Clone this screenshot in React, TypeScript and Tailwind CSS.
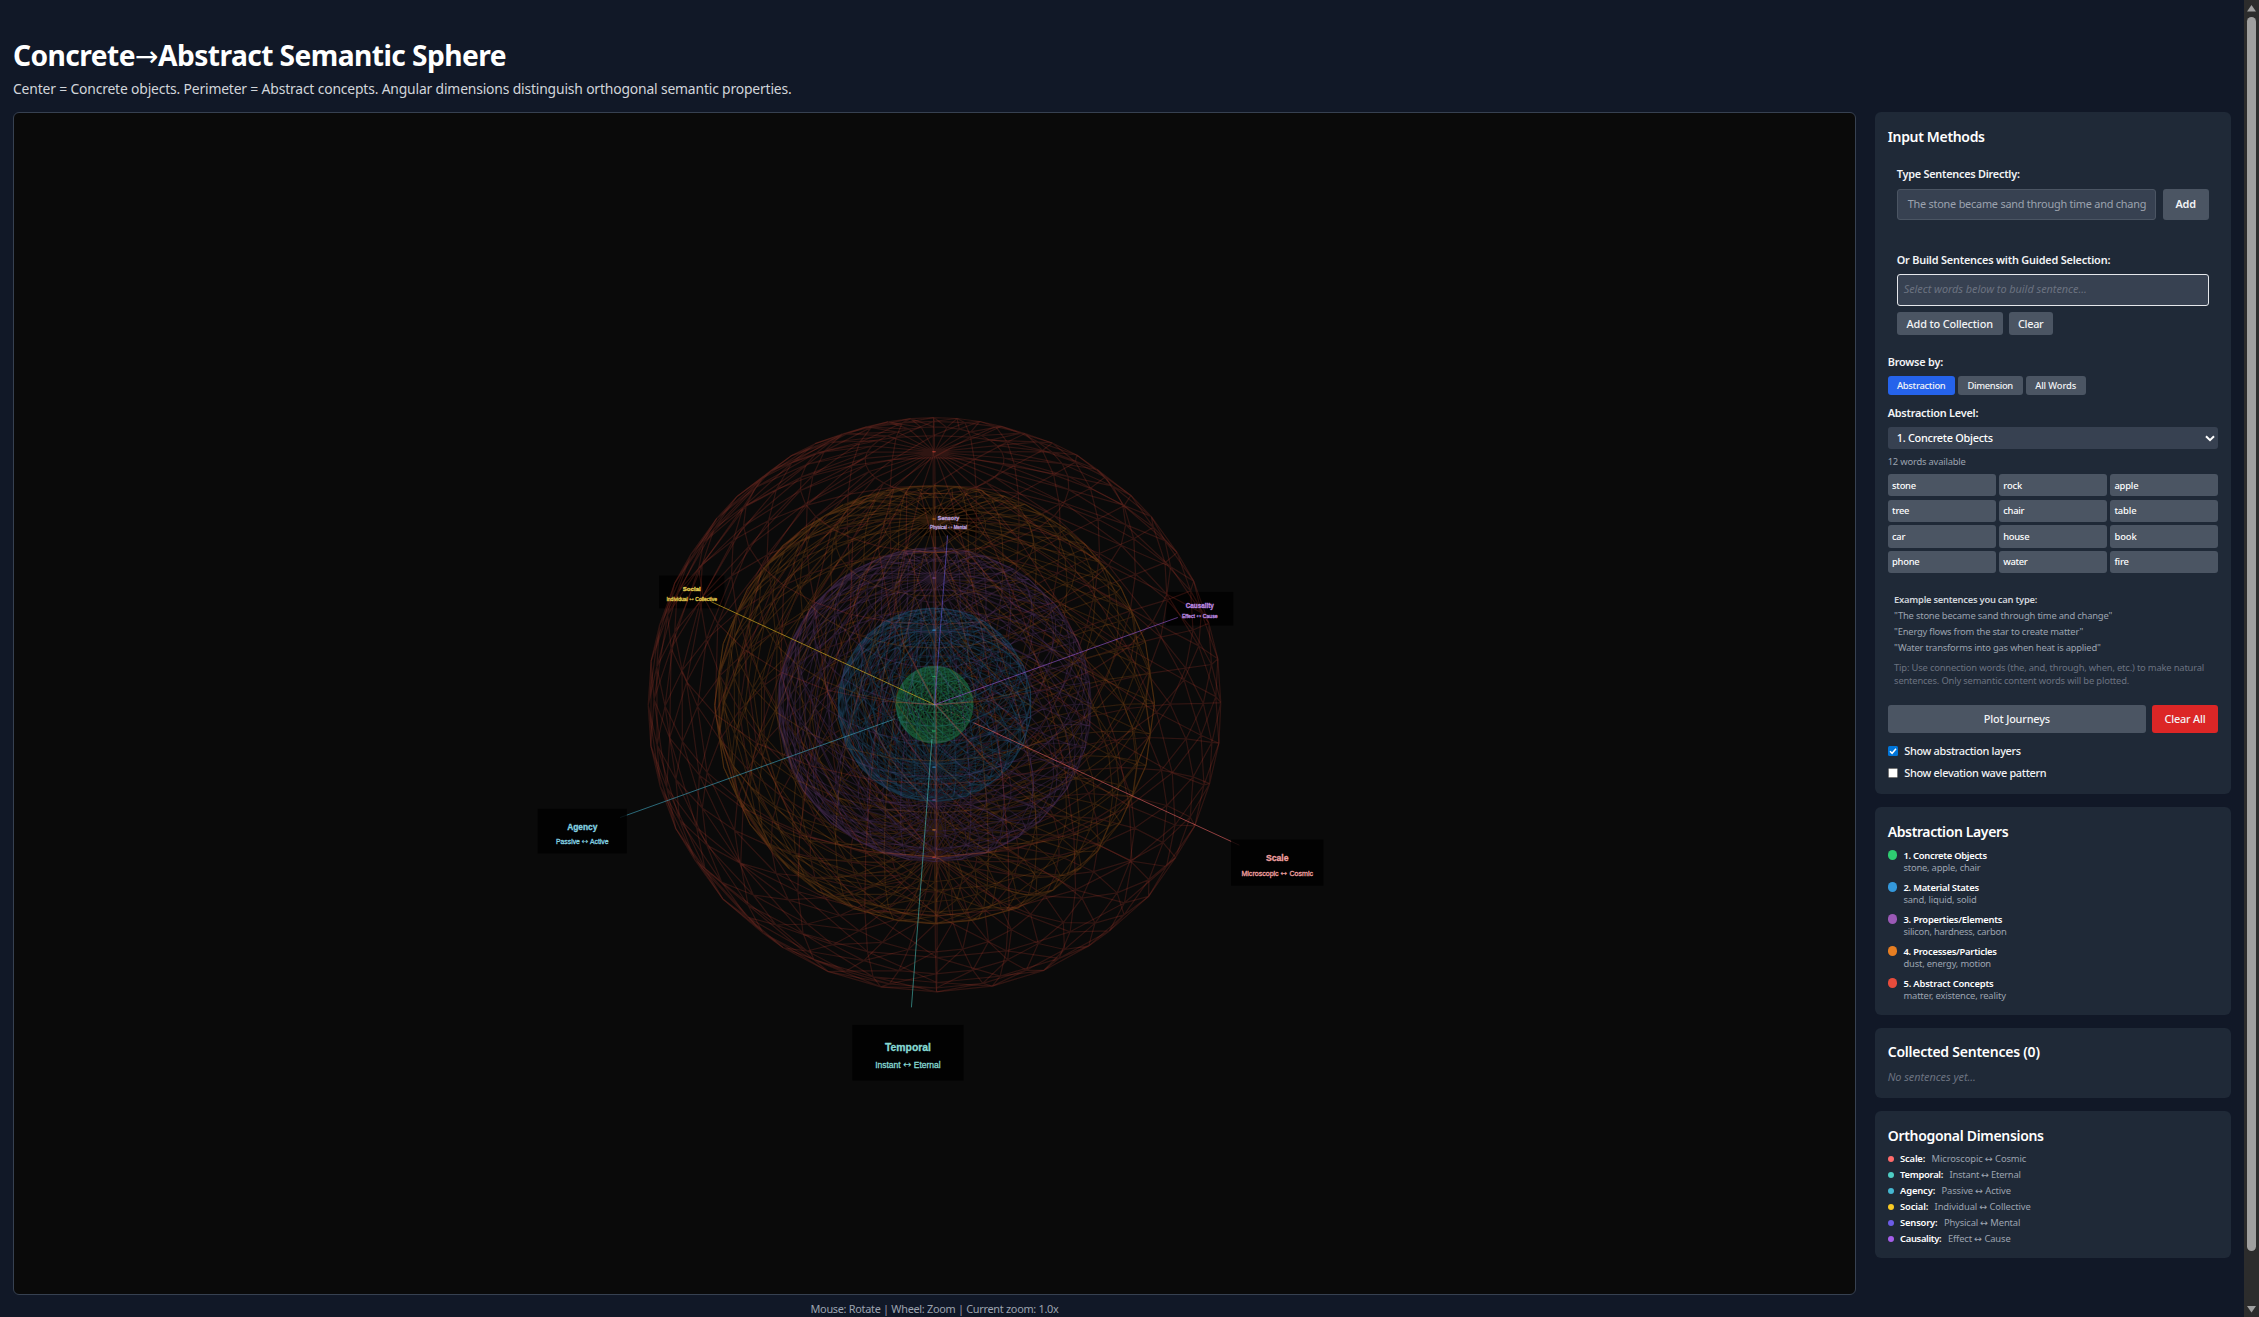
import React, { useLayoutEffect, useRef } from "react";

/* Single line of text whose tracking is adjusted to fill a given width. */
function T({ w, children, className = "" }: { w: number; children: string; className?: string }) {
  const ref = useRef<HTMLSpanElement>(null);
  useLayoutEffect(() => {
    const el = ref.current;
    if (!el) return;
    el.style.letterSpacing = "0px";
    const natural = el.getBoundingClientRect().width;
    el.style.letterSpacing = `${(w - natural) / children.length}px`;
  }, [w, children]);
  return (
    <span ref={ref} className={`inline-block whitespace-pre ${className}`}>
      {children.split(/([→↔])/).map((part, i) =>
        part === "→" || part === "↔" ? (
          <span key={i} className="font-['DejaVu_Sans',sans-serif] leading-none font-normal">
            {part}
          </span>
        ) : (
          part
        )
      )}
    </span>
  );
}

/* ---------- 3D scene ---------- */

const CX = 920.6;
const CY = 591.7;
const FOCAL = 769;
const DIST = 40;
const TILT = Math.PI / 4;

type P = [number, number];
type V = [number, number, number];

function project(x: number, y: number, z: number): P {
  const up = y * Math.cos(TILT) - z * Math.sin(TILT);
  const near = y * Math.sin(TILT) + z * Math.cos(TILT);
  const k = FOCAL / (DIST - near);
  return [CX + x * k, CY - up * k];
}

/* Wireframe edges of a sphere, split into the halves facing to and away from the camera. */
function spherePaths(r: number) {
  const W = 32;
  const H = 16;
  const spin = 0.0066;
  const vertex = (iy: number, ix: number): V => {
    const u = (ix / W) * Math.PI * 2 + spin;
    const v = (iy / H) * Math.PI;
    return [-r * Math.cos(u) * Math.sin(v), r * Math.cos(v), r * Math.sin(u) * Math.sin(v)];
  };
  let front = "";
  let back = "";
  const edge = (a: V, b: V) => {
    const my = (a[1] + b[1]) / 2;
    const mz = (a[2] + b[2]) / 2;
    const facing = (my * Math.sin(TILT) + mz * Math.cos(TILT)) * DIST > r * r;
    const p = project(...a);
    const q = project(...b);
    const d = `M${p[0].toFixed(1)} ${p[1].toFixed(1)}L${q[0].toFixed(1)} ${q[1].toFixed(1)}`;
    if (facing) front += d;
    else back += d;
  };
  for (let iy = 0; iy < H; iy++) {
    for (let ix = 0; ix < W; ix++) {
      const a = vertex(iy, ix);
      edge(a, vertex(iy + 1, ix));
      if (iy > 0) edge(a, vertex(iy, ix + 1));
      if (iy > 0 && iy < H - 1) edge(a, vertex(iy + 1, ix + 1));
    }
  }
  return { front, back };
}

const layers = [
  { r: 2, color: "#2ecc71", o: 0.2 },
  { r: 5, color: "#3498db", o: 0.16 },
  { r: 8, color: "#9b59b6", o: 0.17 },
  { r: 11, color: "#e67e22", o: 0.16 },
  { r: 14, color: "#e74c3c", o: 0.17 },
].map((l) => ({ ...l, ...spherePaths(l.r) }));

const axes = [
  { name: "Scale", range: ["Microscopic ", " Cosmic"], color: "#ff6b6b", text: "#f0a0a0", deg: 56.9, far: false },
  { name: "Temporal", range: ["Instant ", " Eternal"], color: "#4ecdc4", text: "#86d9d3", deg: -3.1, far: false },
  { name: "Agency", range: ["Passive ", " Active"], color: "#45b7d1", text: "#84d2e2", deg: -63.1, far: false },
  { name: "Social", range: ["Individual ", " Collective"], color: "#f9ca24", text: "#e6cf50", deg: -123.1, far: true },
  { name: "Sensory", range: ["Physical ", " Mental"], color: "#6c5ce7", text: "#b79fd6", deg: 176.9, far: true },
  { name: "Causality", range: ["Effect ", " Cause"], color: "#a55eea", text: "#bd8ae2", deg: 116.9, far: true },
];

type Axis = (typeof axes)[number];

function at(deg: number, len: number): P {
  const a = (deg * Math.PI) / 180;
  return project(Math.sin(a) * len, 0, Math.cos(a) * len);
}

function labelFrame(a: Axis) {
  const len = 17.65;
  const [x, y] = at(a.deg, len);
  const depth = 1 - (len / DIST) * Math.cos(TILT) * Math.cos((a.deg * Math.PI) / 180);
  return { x, y: a.far ? y - 0.8 : y, s: 76.6 / depth / 256 };
}

function LabelBox({ a }: { a: Axis }) {
  const { x, y, s } = labelFrame(a);
  return <rect x={x - 128 * s} y={y - 64 * s} width={256 * s} height={128 * s} fill="#000" fillOpacity={0.8} />;
}

function LabelText({ a }: { a: Axis }) {
  const { x, y, s } = labelFrame(a);
  return (
    <g fill={a.text} textAnchor="middle" fontFamily='"Liberation Sans", Arial, sans-serif'>
      <text x={x} y={y - 4 * s} fontSize={24 * s} fontWeight={700} stroke={a.text} strokeWidth={0.3}>
        {a.name}
      </text>
      <text x={x} y={y + 36 * s} fontSize={19.6 * s} stroke={a.text} strokeWidth={0.3}>
        {a.range[0]}
        <tspan fontFamily='"DejaVu Sans", sans-serif' fontSize={23 * s} strokeWidth={0}>↔</tspan>
        {a.range[1]}
      </text>
    </g>
  );
}

function AxisLine({ a }: { a: Axis }) {
  const [ox, oy] = at(0, 0);
  const [mx, my] = at(a.deg, a.far ? 0 : 2.4);
  const [ex, ey] = at(a.deg, 16);
  return (
    <g stroke={a.color} strokeWidth={1}>
      {!a.far && <line x1={ox} y1={oy} x2={mx} y2={my} strokeOpacity={0.25} strokeDasharray="3 3" />}
      <line x1={mx} y1={my} x2={ex} y2={ey} strokeOpacity={0.55} />
    </g>
  );
}

function Scene() {
  return (
    <svg className="block h-full w-full" viewBox="0 0 1841 1181" fill="none">
      {axes.filter((a) => a.far).map((a) => <LabelBox key={a.name} a={a} />)}
      {[...layers].reverse().map((l) => (
        <g key={l.r} strokeWidth={1.25}>
          {l.r < 14 && <path d={l.front + l.back} stroke="#0a0a0a" strokeOpacity={0.8} />}
          <path d={l.back} stroke={l.color} strokeOpacity={l.o} />
        </g>
      ))}
      {layers.map((l) => (
        <path key={l.r} d={l.front} stroke={l.color} strokeOpacity={l.o} strokeWidth={1.25} />
      ))}
      {layers.map((l) =>
        [1, -1].map((sgn) => {
          const [x, y] = project(0, l.r * sgn, 0);
          return <ellipse key={`${l.r}${sgn}`} cx={x - 0.6} cy={y} rx={2} ry={0.8} fill={l.color} fillOpacity={0.6} />;
        })
      )}
      {axes.map((a) => <AxisLine key={a.name} a={a} />)}
      {axes.filter((a) => !a.far).map((a) => <LabelBox key={a.name} a={a} />)}
      {axes.map((a) => <LabelText key={a.name} a={a} />)}
    </svg>
  );
}

/* ---------- side panel ---------- */

const words: [string, number][] = [
  ["stone", 23.7], ["rock", 19], ["apple", 24],
  ["tree", 17], ["chair", 21], ["table", 22],
  ["car", 13], ["house", 26], ["book", 22.3],
  ["phone", 27.3], ["water", 24], ["fire", 14.3],
];

const legend: [string, string, number, string, number][] = [
  ["bg-[#2ecc71]", "1. Concrete Objects", 83.3, "stone, apple, chair", 77],
  ["bg-[#3498db]", "2. Material States", 75.3, "sand, liquid, solid", 73],
  ["bg-[#9b59b6]", "3. Properties/Elements", 98.7, "silicon, hardness, carbon", 103],
  ["bg-[#e67e22]", "4. Processes/Particles", 93.3, "dust, energy, motion", 87.5],
  ["bg-[#e74c3c]", "5. Abstract Concepts", 90, "matter, existence, reality", 102.3],
];

const dims: [string, string, number, string, number][] = [
  ["bg-[#ff6b6b]", "Scale:", 25, "Microscopic ↔ Cosmic", 94.7],
  ["bg-[#4ecdc4]", "Temporal:", 43, "Instant ↔ Eternal", 71],
  ["bg-[#45b7d1]", "Agency:", 35, "Passive ↔ Active", 69.3],
  ["bg-[#f9ca24]", "Social:", 28, "Individual ↔ Collective", 96],
  ["bg-[#6c5ce7]", "Sensory:", 37.3, "Physical ↔ Mental", 76.3],
  ["bg-[#a55eea]", "Causality:", 41.3, "Effect ↔ Cause", 62.7],
];

function Heading({ w, children }: { w: number; children: string }) {
  return (
    <h2 className="h-5 text-[14px] leading-5 font-semibold text-white">
      <T w={w}>{children}</T>
    </h2>
  );
}

function Label({ w, children, className = "" }: { w: number; children: string; className?: string }) {
  return (
    <div className={`h-4 text-[10.9px] leading-4 font-semibold text-gray-100 ${className}`}>
      <T w={w}>{children}</T>
    </div>
  );
}

const btn = "flex items-center justify-center rounded-[3px] bg-[#4b5563] font-medium text-gray-100";

function InputCard() {
  return (
    <section className="h-[682px] rounded-[6px] bg-[#1f2937] pt-[15px] pr-[13px] pl-[12.7px]">
      <Heading w={97}>Input Methods</Heading>
      <div className="px-[9px] pt-[19px]">
        <Label w={123}>Type Sentences Directly:</Label>
        <div className="mt-[7px] flex h-[31px] gap-[7px]">
          <div className="flex w-[259px] items-center overflow-hidden rounded-[3px] border border-[#4b5563] bg-[#374151] px-[10px] text-[10.9px] text-[#9ca3af]">
            <T w={238.5}>The stone became sand through time and chang</T>
          </div>
          <button className={`${btn} w-[46px] text-[10.9px]`}>
            <T w={20.5} className="font-semibold">Add</T>
          </button>
        </div>
        <Label w={213.5} className="mt-8">Or Build Sentences with Guided Selection:</Label>
        <div className="mt-[6px] flex h-8 items-center rounded-[3px] border border-[#e5e7eb] bg-[#374151] px-[6px] pb-0.5 text-[10.9px] text-[#6b7280] italic">
          <T w={183}>Select words below to build sentence...</T>
        </div>
        <div className="mt-[6px] flex h-[23px] gap-[6px] text-[10.9px]">
          <button className={`${btn} w-[106px] pt-px`}>
            <T w={86.3}>Add to Collection</T>
          </button>
          <button className={`${btn} w-[44px] pt-px`}>
            <T w={25.3}>Clear</T>
          </button>
        </div>
      </div>
      <Label w={55.3} className="mt-[19px]">Browse by:</Label>
      <div className="mt-[6px] flex h-[19px] gap-[3px] text-[9.4px]">
        <button className="flex w-[67px] items-center justify-center rounded-[3px] bg-[#2563eb] pt-px font-medium text-gray-100">
          <T w={48.5}>Abstraction</T>
        </button>
        <button className={`${btn} w-[65px] pt-px`}>
          <T w={45.5}>Dimension</T>
        </button>
        <button className={`${btn} w-[60px] pt-px`}>
          <T w={41}>All Words</T>
        </button>
      </div>
      <Label w={90.5} className="mt-[10px]">Abstraction Level:</Label>
      <div className="mt-[6px] flex h-[22px] items-center justify-between rounded-[3px] bg-[#374151] pt-px pr-[3px] pl-[9px] text-[10.9px] font-medium text-white">
        <T w={96}>1. Concrete Objects</T>
        <svg className="h-[7px] w-[10px]" viewBox="0 0 10 7" fill="none" stroke="#fff" strokeWidth="2">
          <path d="M1 1.2 5 5.2 9 1.2" />
        </svg>
      </div>
      <div className="mt-[6px] h-[14px] text-[9.4px] leading-[14px] text-[#9ca3af]">
        <T w={78}>12 words available</T>
      </div>
      <div className="mt-[5px] grid grid-cols-3 gap-[3.2px]">
        {words.map(([word, w]) => (
          <button key={word} className="flex h-[22.4px] items-center rounded-[3px] bg-[#4b5563] pt-px pl-[4.4px] text-[9.4px] font-medium text-white">
            <T w={w}>{word}</T>
          </button>
        ))}
      </div>
      <div className="mt-[18.4px] flex flex-col items-start px-[6.4px] text-[9.4px] leading-4 text-[#9ca3af]">
        <T w={143} className="font-semibold text-[#d1d5db]">Example sentences you can type:</T>
        <T w={218}>"The stone became sand through time and change"</T>
        <T w={189}>"Energy flows from the star to create matter"</T>
        <T w={206.5}>"Water transforms into gas when heat is applied"</T>
        <div className="mt-[5px] flex flex-col items-start leading-[13px] text-[#6b7280]">
          <T w={310}>Tip: Use connection words (the, and, through, when, etc.) to make natural</T>
          <T w={235}>sentences. Only semantic content words will be plotted.</T>
        </div>
      </div>
      <div className="mt-[18.2px] flex h-7 gap-[6px] text-[10.9px]">
        <button className={`${btn} flex-1 pt-px`}>
          <T w={66}>Plot Journeys</T>
        </button>
        <button className="flex w-[66px] items-center justify-center rounded-[3px] bg-[#dc2626] pt-px font-medium text-gray-100">
          <T w={41}>Clear All</T>
        </button>
      </div>
      <label className="mt-[10px] flex h-4 items-center gap-[6.6px] text-[10.9px] leading-4 font-medium text-gray-100">
        <svg className="size-[10px]" viewBox="0 0 10 10">
          <rect width="10" height="10" rx="1.5" fill="#0075d9" />
          <path d="M2 5.2 4.1 7.3 8 2.8" fill="none" stroke="#fff" strokeWidth="1.5" />
        </svg>
        <T w={116.5}>Show abstraction layers</T>
      </label>
      <label className="mt-[6px] flex h-4 items-center gap-[6.6px] text-[10.9px] leading-4 font-medium text-gray-100">
        <span className="size-[10px] rounded-[1.5px] border border-[#767676] bg-white" />
        <T w={142}>Show elevation wave pattern</T>
      </label>
    </section>
  );
}

function Sidebar() {
  return (
    <aside className="flex w-[356px] flex-col gap-[13px]">
      <InputCard />
      <section className="h-[208px] rounded-[6px] bg-[#1f2937] px-[12.7px] pt-[15px]">
        <Heading w={120.5}>Abstraction Layers</Heading>
        <div className="mt-[5px] flex flex-col gap-[8px]">
          {legend.map(([dot, name, w1, ex, w2]) => (
            <div key={name} className="flex h-6 gap-[6.4px] text-[9.4px] leading-[12px]">
              <span className={`mt-[3px] h-[10px] w-[9.4px] rounded-full ${dot}`} />
              <div className="flex flex-col items-start pt-[2.5px]">
                <T w={w1} className="font-semibold text-white">{name}</T>
                <T w={w2} className="text-[#9ca3af]">{ex}</T>
              </div>
            </div>
          ))}
        </div>
      </section>
      <section className="h-[70px] rounded-[6px] bg-[#1f2937] px-[12.7px] pt-[14px]">
        <Heading w={152}>Collected Sentences (0)</Heading>
        <div className="mt-[7px] text-[10.9px] leading-4 text-[#6b7280] italic">
          <T w={88}>No sentences yet...</T>
        </div>
      </section>
      <section className="h-[147px] rounded-[6px] bg-[#1f2937] px-[12.7px] pt-[15px]">
        <Heading w={156}>Orthogonal Dimensions</Heading>
        <div className="mt-[5px] flex flex-col">
          {dims.map(([dot, name, w1, range, w2]) => (
            <div key={name} className="flex h-4 items-center text-[9.4px] leading-4">
              <span className={`mr-[6.4px] size-[6px] rounded-full ${dot}`} />
              <T w={w1} className="mr-[6.5px] font-semibold text-white">{name}</T>
              <T w={w2} className="text-[#9ca3af]">{range}</T>
            </div>
          ))}
        </div>
      </section>
    </aside>
  );
}

export default function App() {
  return (
    <div className="flex h-[1317px] w-[2259px] overflow-hidden bg-[#111827] font-['Noto_Sans','Open_Sans',sans-serif]">
      <div className="flex w-[2244px] flex-col pt-[37px] pl-[13px]">
        <h1 className="h-9 text-[28.2px] leading-9 font-bold text-white">
          <T w={493}>Concrete→Abstract Semantic Sphere</T>
        </h1>
        <p className="mt-[6px] h-5 text-[13.9px] leading-5 text-[#d1d5db]">
          <T w={778.5}>Center = Concrete objects. Perimeter = Abstract concepts. Angular dimensions distinguish orthogonal semantic properties.</T>
        </p>
        <div className="mt-[13px] flex gap-[19px]">
          <main className="w-[1843px]">
            <div className="h-[1183px] overflow-hidden rounded-[6px] border border-[#374151] bg-[#0a0a0a]">
              <Scene />
            </div>
            <div className="mt-[6px] flex h-4 justify-center text-[10.9px] leading-4 text-[#9ca3af]">
              <T w={248}>Mouse: Rotate | Wheel: Zoom | Current zoom: 1.0x</T>
            </div>
          </main>
          <Sidebar />
        </div>
      </div>
      <div className="flex w-[15px] flex-col items-center bg-[#2c2c2c]">
        <svg className="h-[17px] w-[15px]" viewBox="0 0 15 17" fill="#9f9f9f">
          <path d="M7.5 5 12 11.5H3Z" />
        </svg>
        <div className="h-[1234px] w-[9px] rounded-full bg-[#9f9f9f]" />
        <div className="flex-1" />
        <svg className="h-[17px] w-[15px]" viewBox="0 0 15 17" fill="#9f9f9f">
          <path d="M7.5 12.5 12 6H3Z" />
        </svg>
      </div>
    </div>
  );
}
